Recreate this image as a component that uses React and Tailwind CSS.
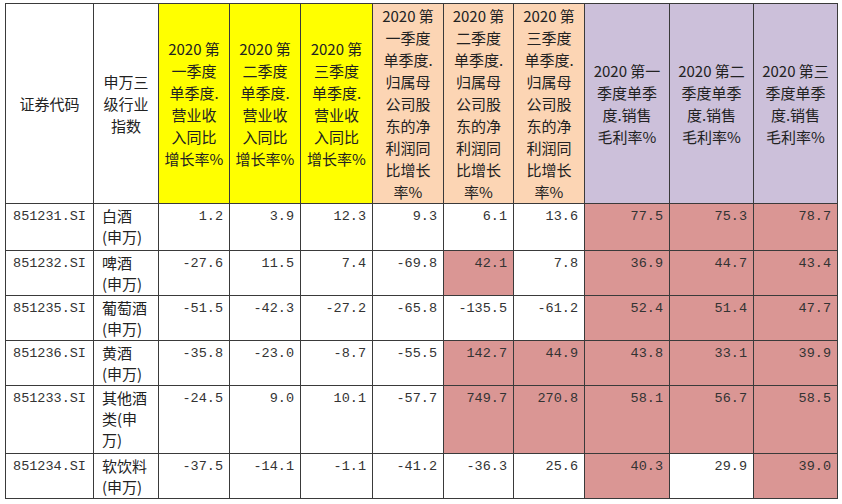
import React from 'react';

const cjk = '"Noto Sans CJK SC", "Noto Sans", sans-serif';
const mono = '"Liberation Mono", "Noto Sans CJK SC", monospace';

const YEL = 'bg-[#ffff00]';
const PEACH = 'bg-[#fcd5b4]';
const LAV = 'bg-[#ccc0da]';
const RED = 'bg-[#da9694]';

const headers = [
    { lines: ['证券代码'], bg: 'bg-white' },
    { lines: ['申万三', '级行业', '指数'], bg: 'bg-white' },
    { lines: ['2020 第', '一季度', '单季度.', '营业收', '入同比', '增长率%'], bg: YEL },
    { lines: ['2020 第', '二季度', '单季度.', '营业收', '入同比', '增长率%'], bg: YEL },
    { lines: ['2020 第', '三季度', '单季度.', '营业收', '入同比', '增长率%'], bg: YEL },
    { lines: ['2020 第', '一季度', '单季度.', '归属母', '公司股', '东的净', '利润同', '比增长', '率%'], bg: PEACH },
    { lines: ['2020 第', '二季度', '单季度.', '归属母', '公司股', '东的净', '利润同', '比增长', '率%'], bg: PEACH },
    { lines: ['2020 第', '三季度', '单季度.', '归属母', '公司股', '东的净', '利润同', '比增长', '率%'], bg: PEACH },
    { lines: ['2020 第一', '季度单季', '度.销售', '毛利率%'], bg: LAV },
    { lines: ['2020 第二', '季度单季', '度.销售', '毛利率%'], bg: LAV },
    { lines: ['2020 第三', '季度单季', '度.销售', '毛利率%'], bg: LAV },
];

const widths = [88, 65, 71, 71, 72, 71, 70, 71, 85, 84, 84];

// each value: [text, highlighted]
const rows = [
    { code: '851231.SI', name: ['白酒', '(申万)'], h: 'h-[47px]',
      vals: [['1.2'], ['3.9'], ['12.3'], ['9.3'], ['6.1'], ['13.6'], ['77.5', 1], ['75.3', 1], ['78.7', 1]] },
    { code: '851232.SI', name: ['啤酒', '(申万)'], h: 'h-[45px]',
      vals: [['-27.6'], ['11.5'], ['7.4'], ['-69.8'], ['42.1', 1], ['7.8'], ['36.9', 1], ['44.7', 1], ['43.4', 1]] },
    { code: '851235.SI', name: ['葡萄酒', '(申万)'], h: 'h-[45px]',
      vals: [['-51.5'], ['-42.3'], ['-27.2'], ['-65.8'], ['-135.5'], ['-61.2'], ['52.4', 1], ['51.4', 1], ['47.7', 1]] },
    { code: '851236.SI', name: ['黄酒', '(申万)'], h: 'h-[45px]',
      vals: [['-35.8'], ['-23.0'], ['-8.7'], ['-55.5'], ['142.7', 1], ['44.9', 1], ['43.8', 1], ['33.1', 1], ['39.9', 1]] },
    { code: '851233.SI', name: ['其他酒', '类(申', '万)'], h: 'h-[68px]',
      vals: [['-24.5'], ['9.0'], ['10.1'], ['-57.7'], ['749.7', 1], ['270.8', 1], ['58.1', 1], ['56.7', 1], ['58.5', 1]] },
    { code: '851234.SI', name: ['软饮料', '(申万)'], h: 'h-[45px]',
      vals: [['-37.5'], ['-14.1'], ['-1.1'], ['-41.2'], ['-36.3'], ['25.6'], ['40.3', 1], ['29.9'], ['39.0', 1]] },
];

const Lines = ({ lines }) => lines.map((l, i) => (
    <span key={i} className="block whitespace-nowrap">{l}</span>
));

export default function App() {
    return (
        <div className="w-[842px] h-[504px] bg-white pl-[5px] pt-[3px] overflow-hidden">
            <table
                className="table-fixed border-collapse w-[833px] text-[#222]"
                style={{ fontFamily: cjk }}
            >
                <colgroup>
                    {widths.map((w, i) => <col key={i} style={{ width: w }} />)}
                </colgroup>
                <thead>
                    <tr className="h-[200px]">
                        {headers.map((h, i) => (
                            <th
                                key={i}
                                className={`${h.bg} border border-[#3a3a3a] p-0 align-middle text-center font-normal text-[15px] leading-[22px]`}
                            >
                                <Lines lines={h.lines} />
                            </th>
                        ))}
                    </tr>
                </thead>
                <tbody>
                    {rows.map(r => (
                        <tr key={r.code} className={r.h}>
                            <td
                                className="border border-[#3a3a3a] p-0 pt-[2px] align-top text-center text-[13.5px] leading-[21px] text-[#333]"
                                style={{ fontFamily: mono }}
                            >
                                {r.code}
                            </td>
                            <td className="border border-[#3a3a3a] p-0 pt-[1px] pl-[8px] align-top text-left text-[15px] leading-[21px]">
                                <Lines lines={r.name} />
                            </td>
                            {r.vals.map(([v, hl], i) => (
                                <td
                                    key={i}
                                    className={`${hl ? RED : 'bg-white'} border border-[#3a3a3a] p-0 pt-[2px] pr-[6px] align-top text-right text-[13.5px] leading-[21px] text-[#333]`}
                                    style={{ fontFamily: mono }}
                                >
                                    {v}
                                </td>
                            ))}
                        </tr>
                    ))}
                </tbody>
            </table>
        </div>
    );
}
